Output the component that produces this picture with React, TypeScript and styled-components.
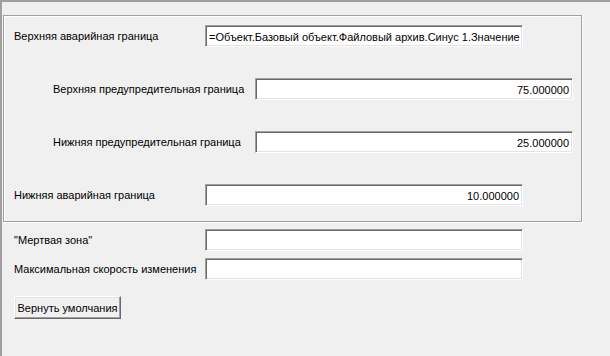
import React from "react";
import styled, { createGlobalStyle } from "styled-components";

const Global = createGlobalStyle`
  html, body { margin: 0; padding: 0; background: #f0f0f0; }
  body { font-family: "Liberation Sans", Arial, sans-serif; font-size: 11px; color: #000; }
  * { box-sizing: border-box; }
`;

const Frame = styled.div`
  width: 610px;
  height: 356px;
  background: #f0f0f0;
  border-top: 2px solid #a0a0a0;
  border-left: 2px solid #a0a0a0;
  display: flex;
  flex-direction: column;
  align-items: flex-start;
`;

const GroupBox = styled.div`
  margin: 13px 0 0 1px;
  width: 579px;
  border: 1px solid #a0a0a0;
  box-shadow: inset 1px 1px 0 #fff, 1px 1px 0 #fff;
  padding: 9px 0 15px 0;
  display: flex;
  flex-direction: column;
  gap: 31px;
`;

const Row = styled.div<{ $indent: number; $top?: number }>`
  display: flex;
  align-items: center;
  height: 22px;
  padding-left: ${(p) => p.$indent}px;
  margin-top: ${(p) => p.$top ?? 0}px;
`;

const Label = styled.span<{ $w: number }>`
  width: ${(p) => p.$w}px;
  flex: none;
  white-space: nowrap;
  font-size: 11px;
`;

const Field = styled.div<{ $w: number; $align?: string }>`
  width: ${(p) => p.$w}px;
  height: 22px;
  flex: none;
  background: #fff;
  border-top: 1px solid #a0a0a0;
  border-left: 1px solid #a0a0a0;
  border-bottom: 1px solid #fff;
  border-right: 1px solid #fff;
  box-shadow: inset 1px 1px 0 #696969, inset -1px -1px 0 #e3e3e3;
  display: flex;
  align-items: center;
  justify-content: ${(p) => (p.$align === "right" ? "flex-end" : "flex-start")};
  padding: 1px 3px 0 3px;
  white-space: nowrap;
  overflow: hidden;
  font-size: 11px;
`;

const Button = styled.button`
  margin: 16px 0 0 12px;
  width: 107px;
  height: 23px;
  background: #f0f0f0;
  font-family: "Liberation Sans", Arial, sans-serif;
  font-size: 11px;
  color: #000;
  border-top: 1px solid #fff;
  border-left: 1px solid #fff;
  border-bottom: 1px solid #696969;
  border-right: 1px solid #696969;
  box-shadow: inset -1px -1px 0 #a0a0a0, inset 1px 1px 0 #e3e3e3;
  padding: 0;
`;

export default function App() {
  return (
    <>
      <Global />
      <Frame>
        <GroupBox>
          <Row $indent={10}>
            <Label $w={191}>Верхняя аварийная граница</Label>
            <Field $w={318}>=Объект.Базовый объект.Файловый архив.Синус 1.Значение</Field>
          </Row>
          <Row $indent={49}>
            <Label $w={202}>Верхняя предупредительная граница</Label>
            <Field $w={318} $align="right">75.000000</Field>
          </Row>
          <Row $indent={49}>
            <Label $w={202}>Нижняя предупредительная граница</Label>
            <Field $w={318} $align="right">25.000000</Field>
          </Row>
          <Row $indent={10}>
            <Label $w={191}>Нижняя аварийная граница</Label>
            <Field $w={318} $align="right">10.000000</Field>
          </Row>
        </GroupBox>
        <Row $indent={12} $top={7}>
          <Label $w={191}>"Мертвая зона"</Label>
          <Field $w={318} />
        </Row>
        <Row $indent={12} $top={7}>
          <Label $w={191}>Максимальная скорость изменения</Label>
          <Field $w={318} />
        </Row>
        <Button>Вернуть умолчания</Button>
      </Frame>
    </>
  );
}
